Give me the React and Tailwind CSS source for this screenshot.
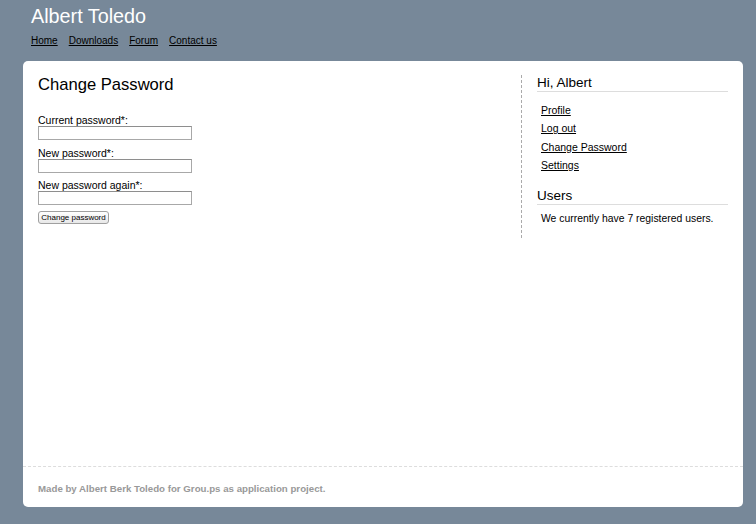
import React from "react";

export default function App() {
  const font = { fontFamily: '"Liberation Sans", Arial, sans-serif' };
  return (
    <div className="w-[756px] h-[524px] bg-[#778899] overflow-hidden" style={font}>
      <div className="pl-[31px] pt-[5px]">
        <h1 className="text-[19.8px] leading-[22px] text-white">Albert Toledo</h1>
        <nav className="mt-[8px] flex gap-[11px] text-[10px] leading-[12px] text-black">
          <a href="#" className="underline">Home</a>
          <a href="#" className="underline">Downloads</a>
          <a href="#" className="underline">Forum</a>
          <a href="#" className="underline">Contact us</a>
        </nav>
      </div>
      <div className="ml-[23px] mt-[14px] w-[720px] h-[446px] bg-white rounded-[5px] flex flex-col">
        <div className="flex-1 flex">
          <div className="w-[498px] pl-[15px] pt-[14px]">
            <h2 className="text-[16.6px] leading-[20px] text-black">Change Password</h2>
            <form className="mt-[20px]" onSubmit={(e) => e.preventDefault()}>
              {["Current password*:", "New password*:", "New password again*:"].map((l, i) => (
                <div key={l} className={i < 2 ? "mb-[7.5px]" : "mb-[6px]"}>
                  <label className="block text-[10.5px] leading-[11px] text-black">{l}</label>
                  <input
                    type="password"
                    className="block w-[154px] h-[14px] border border-[#a8a8a8] border-t-[#8e8e8e] bg-white"
                  />
                </div>
              ))}
              <button
                type="submit"
                className="block w-[71px] h-[13px] rounded-[3px] border border-[#a0a0a0] bg-gradient-to-b from-white to-[#e8e8e8] text-[8px] leading-[11px] text-black"
              >
                Change password
              </button>
            </form>
          </div>
          <div className="w-[222px] self-start mt-[14px] border-l border-dashed border-[#aaaaaa] pl-[15px] pr-[15px] pb-[13px]">
            <h3 className="text-[13.5px] leading-[16px] text-black border-b border-[#dddddd]">Hi, Albert</h3>
            <ul className="mt-[8.5px] pl-[4px] text-[10.5px] leading-[18.5px]">
              <li><a href="#" className="underline text-black">Profile</a></li>
              <li><a href="#" className="underline text-black">Log out</a></li>
              <li><a href="#" className="underline text-black">Change Password</a></li>
              <li><a href="#" className="underline text-black">Settings</a></li>
            </ul>
            <h3 className="mt-[13.5px] text-[13.5px] leading-[16px] text-black border-b border-[#dddddd]">Users</h3>
            <p className="mt-[7.5px] pl-[4px] text-[10.4px] leading-[12px] text-black">We currently have 7 registered users.</p>
          </div>
        </div>
        <div className="h-[41px] border-t border-dashed border-[#dddddd] pl-[15px] pt-[16px]">
          <p className="text-[9.7px] leading-[12px] font-bold text-[#999999]">
            Made by Albert Berk Toledo for Grou.ps as application project.
          </p>
        </div>
      </div>
    </div>
  );
}
